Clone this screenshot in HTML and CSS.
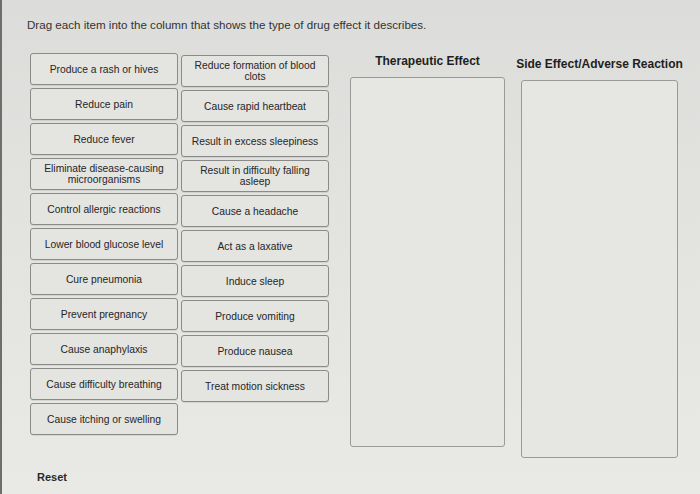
FILE: index.html
```html
<!DOCTYPE html>
<html>
<head>
<meta charset="utf-8">
<link rel="stylesheet" href="styles.css">
</head>
<body>
<div class="page">
  <p class="instr">Drag each item into the column that shows the type of drug effect it describes.</p>
  <div class="main">
    <div class="bank">
      <div class="col col-left">
        <div class="card">Produce a rash or hives</div>
        <div class="card">Reduce pain</div>
        <div class="card">Reduce fever</div>
        <div class="card">Eliminate disease-causing microorganisms</div>
        <div class="card">Control allergic reactions</div>
        <div class="card">Lower blood glucose level</div>
        <div class="card">Cure pneumonia</div>
        <div class="card">Prevent pregnancy</div>
        <div class="card">Cause anaphylaxis</div>
        <div class="card">Cause difficulty breathing</div>
        <div class="card">Cause itching or swelling</div>
      </div>
      <div class="col col-right">
        <div class="card">Reduce formation of blood clots</div>
        <div class="card">Cause rapid heartbeat</div>
        <div class="card">Result in excess sleepiness</div>
        <div class="card">Result in difficulty falling asleep</div>
        <div class="card">Cause a headache</div>
        <div class="card">Act as a laxative</div>
        <div class="card">Induce sleep</div>
        <div class="card">Produce vomiting</div>
        <div class="card">Produce nausea</div>
        <div class="card">Treat motion sickness</div>
      </div>
    </div>
    <div class="zones">
      <div class="zone-wrap zone-a">
        <h2 class="zone-title">Therapeutic Effect</h2>
        <div class="zone"></div>
      </div>
      <div class="zone-wrap zone-b">
        <h2 class="zone-title">Side Effect/Adverse Reaction</h2>
        <div class="zone"></div>
      </div>
    </div>
  </div>
  <div class="reset">Reset</div>
</div>
</body>
</html>
```

FILE: styles.css
```css
html, body {
  margin: 0;
  padding: 0;
}
body {
  width: 700px;
  height: 494px;
  overflow: hidden;
  background: linear-gradient(180deg, #dcdcda 0%, #e2e2df 40%, #e9e9e5 100%);
  font-family: "Liberation Sans", Arial, sans-serif;
  color: #222;
  border-left: 2px solid #6e6e6e;
  box-sizing: border-box;
}
.page {
  padding: 18px 0 0 25px;
}
.instr {
  margin: 0 0 21px 0;
  font-size: 11.6px;
  line-height: 14px;
  color: #333;
}
.main {
  display: flex;
  align-items: flex-start;
  height: 404px;
}
.bank {
  display: flex;
  gap: 3px;
  margin-left: 3px;
}
.col {
  display: flex;
  flex-direction: column;
  gap: 3px;
  width: 148px;
}
.col-right {
  margin-top: 2px;
}
.card {
  height: 32px;
  box-sizing: border-box;
  border: 1px solid #8a8a88;
  border-radius: 3px;
  background: #e4e4e1;
  box-shadow: 0 1px 0 rgba(0,0,0,0.08);
  display: flex;
  align-items: center;
  justify-content: center;
  text-align: center;
  font-size: 10.3px;
  line-height: 11px;
  padding: 0 6px;
  color: #262626;
}
.zones {
  display: flex;
  gap: 16px;
  margin-left: 21px;
  margin-top: 1px;
}
.zone-wrap {
  display: flex;
  flex-direction: column;
  align-items: center;
}
.zone-a {
  width: 155px;
}
.zone-b {
  width: 157px;
  margin-top: 3px;
}
.zone-title {
  margin: 0 0 9px 0;
  font-size: 12px;
  line-height: 14px;
  font-weight: bold;
  color: #1e1e1e;
  white-space: nowrap;
}
.zone {
  width: 100%;
  box-sizing: border-box;
  border: 1px solid #9a9a98;
  border-radius: 3px;
  background: #e6e6e3;
}
.zone-a .zone {
  height: 370px;
}
.zone-b .zone {
  height: 378px;
}
.reset {
  margin: 13px 0 0 10px;
  font-size: 11px;
  line-height: 14px;
  font-weight: bold;
  color: #2a2a2a;
}
```
